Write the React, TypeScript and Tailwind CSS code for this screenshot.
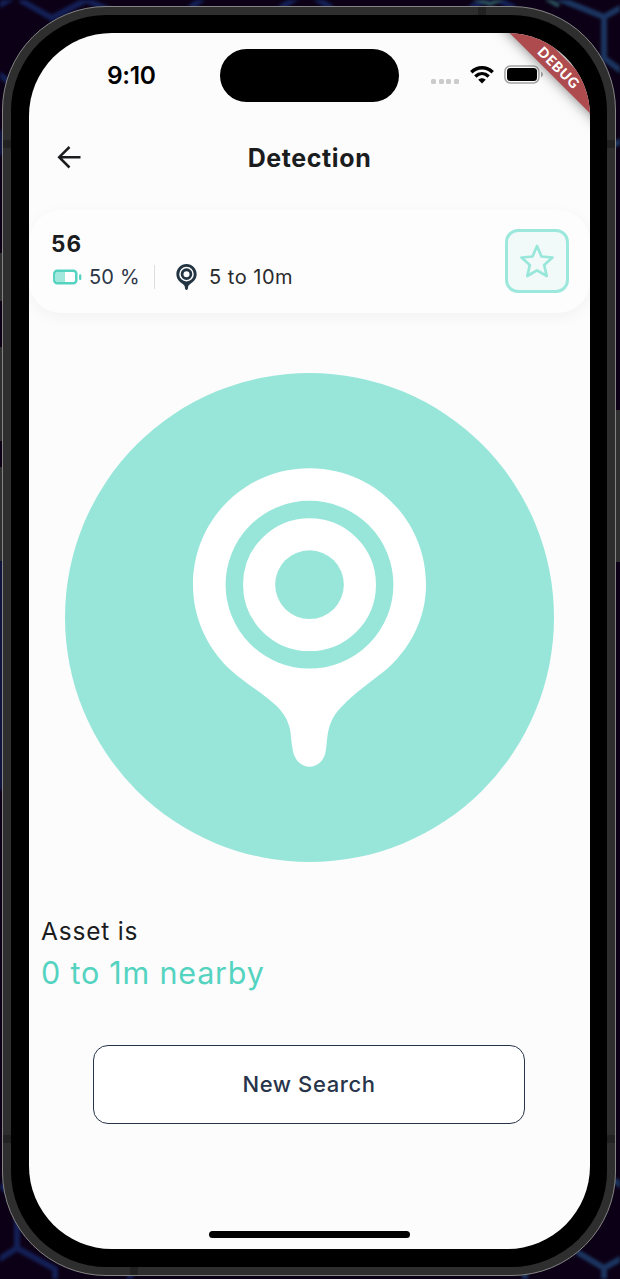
import React from "react";

function Pin({ className, rings }: { className: string; rings: string }) {
  return (
    <svg viewBox="0 0 234 300" className={className}>
      <path
        fill="currentColor"
        d="M117 0C52 0 0 52 0 117C0 150 14 180 37 202C53 217 71 226 84 239C94 249 98 259 98.500 271C99.500 280 100.500 286 102 289C108 303.500 126 303.500 132 289C133.500 286 134 278 135 269C137 255 142 247 150 239C162 226 178 215 192 204C218 182 234 151 234 117C234 52 182 0 117 0Z"
      />
      <circle cx="117" cy="117" r="75.500" fill="none" stroke={rings} strokeWidth="17.500" />
      <circle cx="117" cy="117" r="34.500" fill={rings} />
    </svg>
  );
}

function Wallpaper() {
  return (
    <svg className="absolute inset-0 h-full w-full blur-[1.500px]" viewBox="0 0 620 1279">
      <rect x="-10" y="-10" width="640" height="1299" fill="#0c0016" />
      <g fill="none" stroke="#131f55" strokeWidth="6">
        <path d="M-4 7L12 -2M20 0L52 18L86 0M86 0L112 11M190 8L203 -2M280 8L298 -3M315 -2L332 8M470 8L492 -3L515 8" />
        <path d="M-4 72L12 84M0 130V155M0 560V790M0 1185L18 1200M-5 1262L17 1248L55 1269V1280M17 1248V1215M130 1279V1270" />
      </g>
      <g fill="none" stroke="#1b3560" strokeWidth="6">
        <path d="M557 -2L604 17L622 7M604 17V58L624 73M614 145L624 139M615 1180L622 1187M577 1252L604 1268L622 1258M604 1268V1282M525 1279V1273" />
      </g>
      <path d="M472 -2L490 4L505 -2M545 -2L559 6" fill="none" stroke="#2b515e" strokeWidth="4" />
    </svg>
  );
}

function StatusBar() {
  return (
    <div className="relative flex h-[84px] shrink-0 items-center">
      <span className="ml-[78px] w-[53px] text-[24.500px] leading-6 font-semibold tracking-[-0.4px] text-black">9:10</span>
      <div className="ml-[60px] h-[53px] w-[179px] rounded-full bg-black" />
      <div className="mt-3 ml-[32px] flex gap-[2.500px]">
        <i className="size-[5px] rounded-[1.500px] bg-[#cbcbcb]" />
        <i className="size-[5px] rounded-[1.500px] bg-[#cbcbcb]" />
        <i className="size-[5px] rounded-[1.500px] bg-[#cbcbcb]" />
        <i className="size-[5px] rounded-[1.500px] bg-[#cbcbcb]" />
      </div>
      <svg className="ml-[11px] h-[18px] w-6" viewBox="0 0 24 18" fill="none" stroke="#000" strokeWidth="3.400">
        <path d="M1.300 6.200C7.500 .2 16.500 .2 22.700 6.200" />
        <path d="M5.300 10.400C9.300 6.700 14.700 6.700 18.700 10.400" />
        <path d="M8.300 13.800C10.300 11.800 13.700 11.800 15.700 13.800L12 17.600Z" fill="#000" stroke="none" />
      </svg>
      <svg className="-mt-px ml-[10px] h-[19px] w-10" viewBox="0 0 40 19">
        <rect x=".9" y="1" width="34" height="17" rx="5.500" fill="none" stroke="#a3a3a3" strokeWidth="1.500" />
        <rect x="3" y="3" width="30" height="13" rx="3.500" fill="#000" />
        <path d="M37 6.500Q41 9.500 37 12.500Z" fill="#a3a3a3" />
      </svg>
    </div>
  );
}

function DebugRibbon() {
  return (
    <div className="absolute top-0 right-0 size-[120px] overflow-hidden">
      <div className="absolute top-[23.500px] left-[3.500px] flex h-[21px] w-[170px] rotate-45 items-center justify-center bg-[#ae4b4e] font-['Lato'] text-[14px] font-black tracking-[0.8px] text-white shadow-[0_0_13px_rgba(0,0,0,0.5)]">
        DEBUG
      </div>
    </div>
  );
}

function AssetCard() {
  return (
    <section className="mt-[27px] flex h-[103px] shrink-0 items-center rounded-[32px] bg-[#fdfdfd] pr-[21px] pl-[22px] shadow-[0_4px_16px_rgba(0,0,0,0.045)]">
      <div className="-mt-px flex-1">
        <h2 className="text-[22.500px] leading-7 font-bold tracking-[1px] text-[#1b1c1e]">56</h2>
        <div className="mt-[4px] flex h-[30px] items-center">
          <svg className="ml-[2px] h-4 w-[29px]" viewBox="0 0 29 16">
            <rect x="1.300" y="1.800" width="22" height="12.500" rx="3" fill="#fff" stroke="#55d3c1" strokeWidth="2.500" />
            <path d="M3 3H12V13H3Z" fill="#a2e8dc" />
            <path d="M27.200 6.500V10" stroke="#55d3c1" strokeWidth="2.300" strokeLinecap="round" />
          </svg>
          <span className="ml-[7px] w-[50px] text-[20px] tracking-[0.2px] whitespace-nowrap text-[#2c3546]">50 %</span>
          <div className="ml-[15px] h-6 w-px bg-[#dedede]" />
          <Pin className="ml-[21px] h-[26px] w-[21px] text-[#223442]" rings="#fdfdfd" />
          <span className="ml-[12px] text-[20px] tracking-[0.5px] whitespace-nowrap text-[#292b2d]">5 to 10m</span>
        </div>
      </div>
      <button className="mt-[-2px] flex size-16 items-center justify-center rounded-[13px] border-[3px] border-[#9de8dd] bg-[#f1faf9]">
        <svg className="size-[34px]" viewBox="0 0 34 34" fill="none" stroke="#99e6da" strokeWidth="2.700" strokeLinejoin="round">
          <path d="M17 2L21.500 12.500L32.500 13.500L24.200 21L26.700 32L17 26.300L7.300 32L9.800 21L1.500 13.500L12.500 12.500Z" />
        </svg>
      </button>
    </section>
  );
}

export default function App() {
  return (
    <main className="relative h-[1279px] w-[620px] overflow-hidden bg-[#0c0016] font-['Inter',sans-serif]">
      <Wallpaper />
      <div className="absolute top-[253px] left-0 h-[48px] w-[3px] bg-[#303030]" />
      <div className="absolute top-[347px] left-0 h-[94px] w-[3px] bg-[#303030]" />
      <div className="absolute top-[467px] left-0 h-[94px] w-[3px] bg-[#303030]" />
      <div className="absolute top-[410px] right-0 h-[152px] w-[5px] bg-[#303030]" />
      <div className="relative mt-[6px] ml-[2px] h-[1270px] w-[614px] rounded-[104px] border border-[#858585] bg-[#2e2e2e] p-2">
        <i className="absolute top-0 left-[475px] h-2 w-2 bg-[#222]" />
        <i className="absolute bottom-0 left-[127px] h-2 w-2 bg-[#222]" />
        <i className="absolute top-[133px] left-0 h-2 w-2 bg-[#222]" />
        <i className="absolute top-[133px] right-0 h-2 w-2 bg-[#222]" />
        <i className="absolute bottom-[132px] left-0 h-2 w-2 bg-[#222]" />
        <i className="absolute right-0 bottom-[132px] h-2 w-2 bg-[#222]" />
        <div className="relative h-full rounded-[96px] bg-black pt-[18px] pl-[18px]">
          <div className="relative flex h-[1216px] w-[561px] flex-col overflow-hidden rounded-[83px] bg-[#fcfcfc]">
            <StatusBar />
            <header className="relative flex h-[66px] shrink-0 items-center justify-center pt-[18px]">
              <svg className="absolute top-[28px] left-[28px] h-6 w-[25px]" viewBox="0 0 25 24" fill="none" stroke="#1b1c1e" strokeWidth="2.500">
                <path d="M23.500 12.200H2.500M12.500 2L2.200 12.200L12.500 22.500" />
              </svg>
              <h1 className="text-[25px] font-bold tracking-[0.6px] text-[#1b1c1e]">Detection</h1>
            </header>
            <AssetCard />
            <div className="mt-[60px] ml-[36px] flex size-[489px] shrink-0 justify-center rounded-full bg-[#98e6da] pt-[94px]">
              <Pin className="h-[301px] w-[233px] text-white" rings="#98e6da" />
            </div>
            <div className="mt-[53px] ml-3">
              <p className="text-[24.500px] leading-8 tracking-[0.8px] text-[#1b1c1e]">Asset is</p>
              <p className="mt-[6px] text-[30.500px] leading-10 tracking-[0.8px] text-[#55d3c1]">0 to 1m nearby</p>
            </div>
            <button className="mt-[52px] ml-[64px] h-[79px] w-[432px] shrink-0 rounded-[15px] border border-[#273449] bg-white text-[22px] font-medium tracking-[0.6px] text-[#273449]">New Search</button>
            <div className="mt-auto mb-[11px] ml-[180px] h-[7px] w-[201px] shrink-0 rounded-full bg-black" />
            <DebugRibbon />
          </div>
        </div>
      </div>
    </main>
  );
}
